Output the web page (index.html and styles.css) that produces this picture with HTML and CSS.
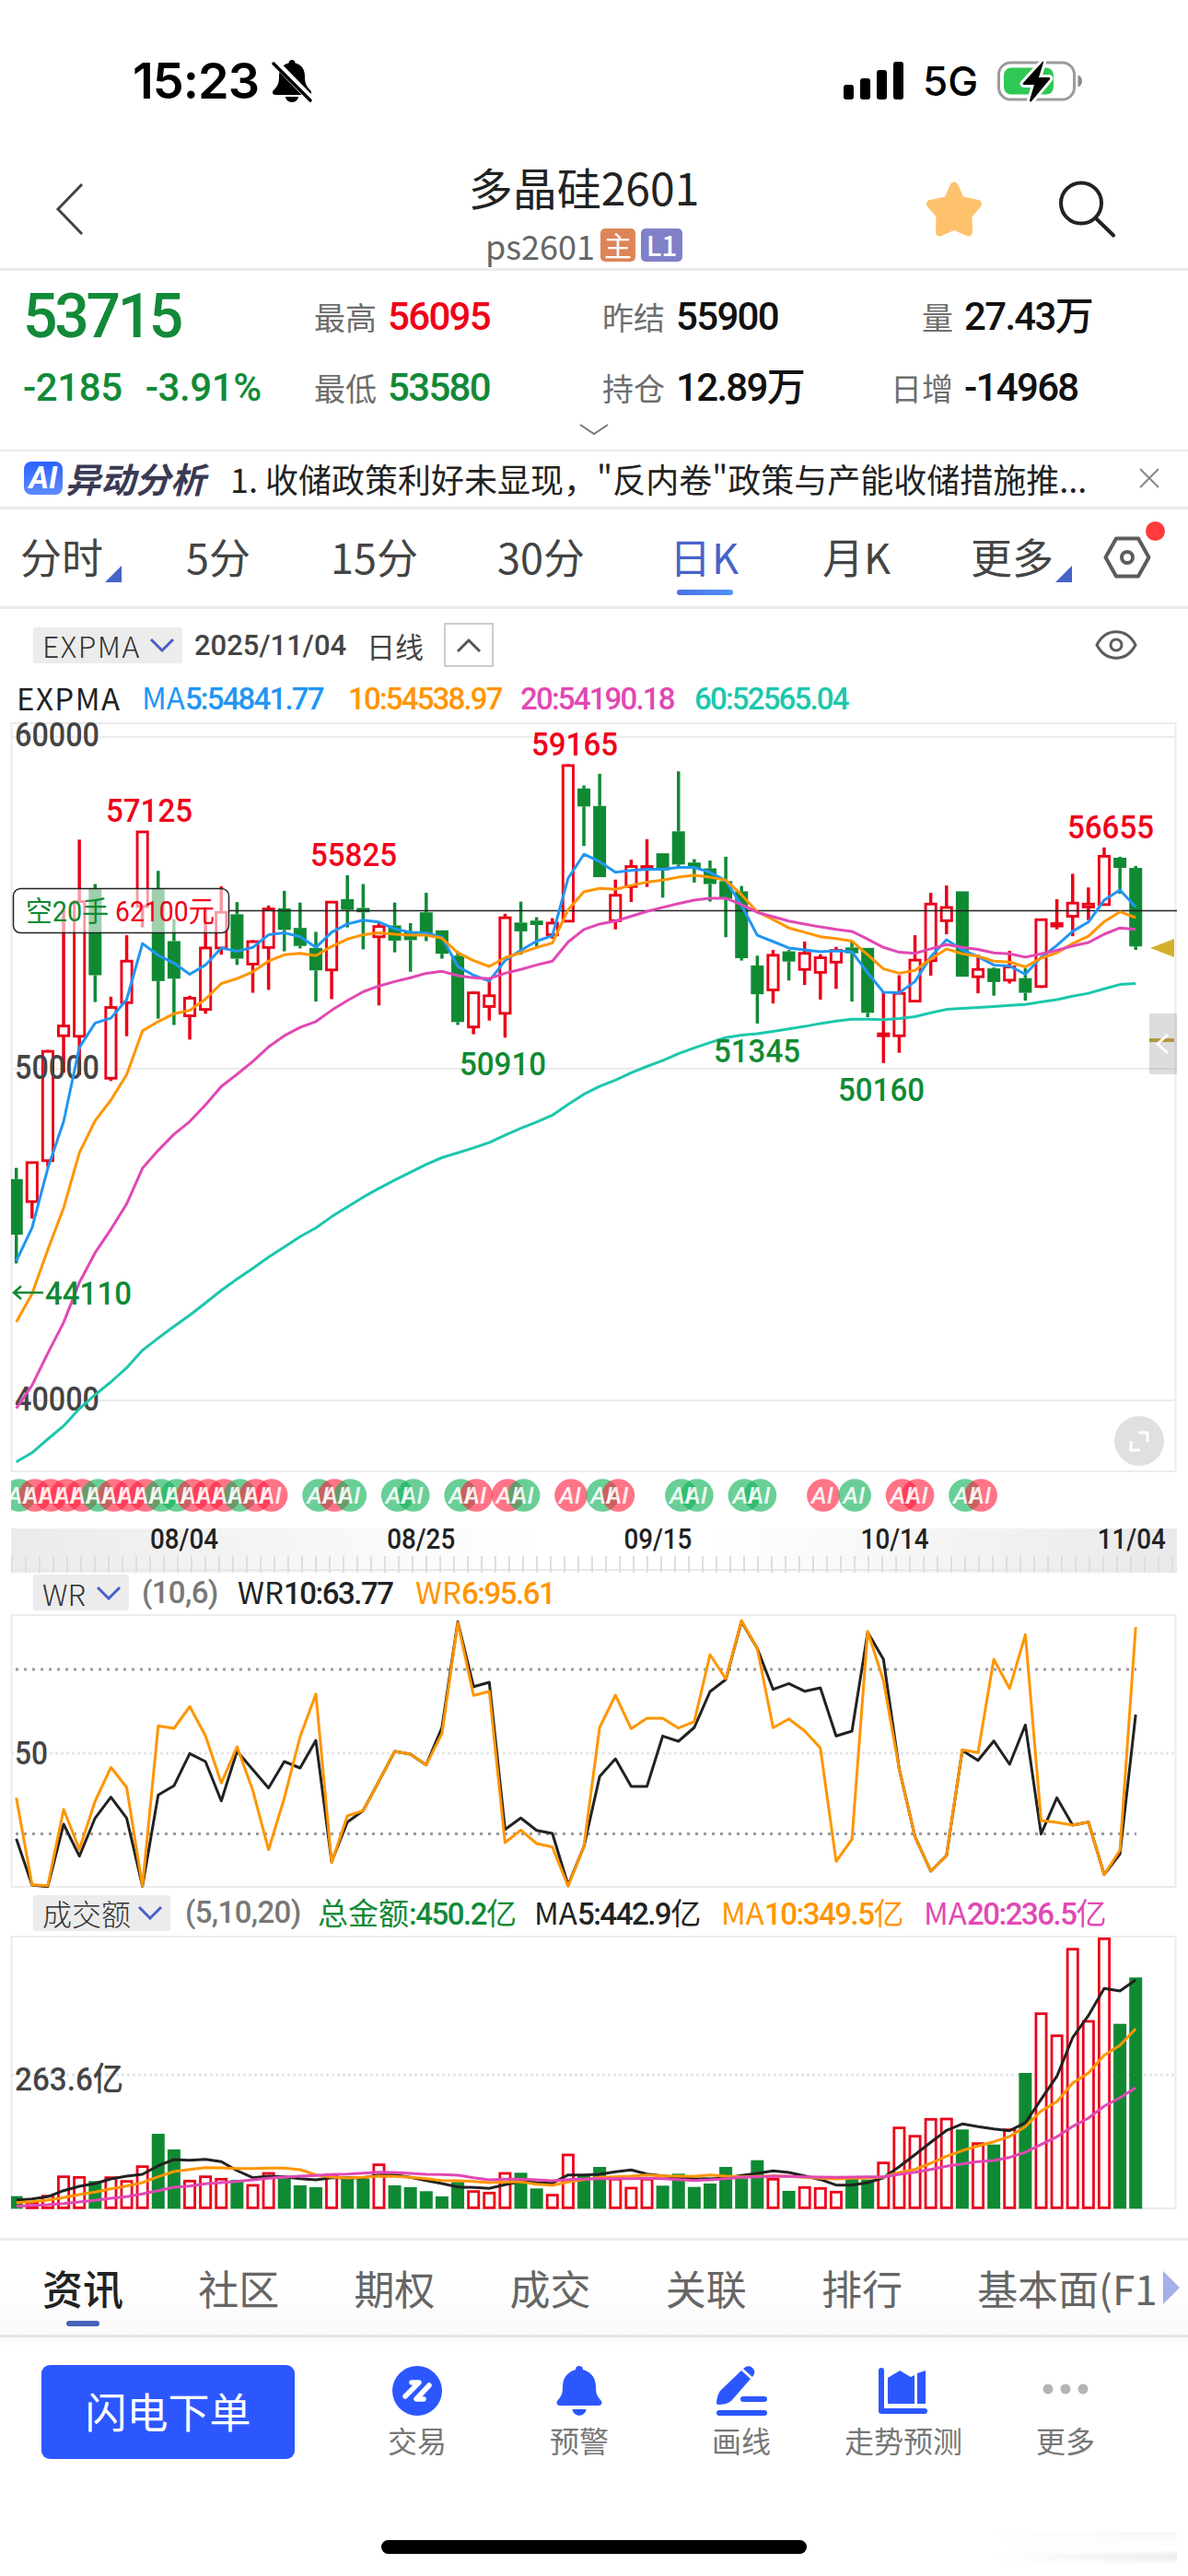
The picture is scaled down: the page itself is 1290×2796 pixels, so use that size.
FILE: index.html
```html
<!DOCTYPE html>
<html lang="zh-CN">
<head>
    <meta charset="UTF-8">
    <meta name="viewport" content="width=device-width, initial-scale=1.0">
    <title>多晶硅2601</title>
    <link rel="stylesheet" href="styles.css">
</head>
<body>
    <div class="status-bar">
        <span class="clock">15:23</span>
        <svg class="bell-off" width="46" height="48" viewBox="0 0 46 48">
            <path d="M23 1c-2 0-3.500 1.500-3.500 3.500C12 6 9 12 9 19c0 8-2 11-6 15-2 2-1 5 2 5h36c3 0 4-3 2-5-4-4-6-7-6-15 0-7-3-13-10.500-14.500C26.500 2.500 25 1 23 1z"/>
            <path d="M16 41h14a7 6 0 0 1-14 0z"/>
            <path d="M4 3l40 41" stroke="#fff" stroke-width="8"/>
            <path d="M3 5l40 40" stroke="#000" stroke-width="3.500" stroke-linecap="round"/>
        </svg>
        <svg class="signal" width="66" height="42" viewBox="0 0 66 42">
            <rect x="0" y="25" width="11" height="16" rx="3"/>
            <rect x="18" y="18" width="11" height="23" rx="3"/>
            <rect x="36" y="9" width="11" height="32" rx="3"/>
            <rect x="54" y="0" width="11" height="41" rx="3"/>
        </svg>
        <span class="network">5G</span>
        <svg class="battery" width="94" height="46" viewBox="0 0 94 46">
            <rect x="1.500" y="3" width="82" height="40" rx="13" fill="none" stroke="#9b9b9b" stroke-width="3"/>
            <path d="M87.500 16.500c6 2 6 11 0 13z" fill="#8a8a8a"/>
            <rect x="7" y="8.500" width="54" height="29" rx="8" fill="#30c854"/>
            <path d="M49 2L28 25c-1 1 0 2 1 2h11l-5 17c0 1 1 2 2 1l20-24c1-1 0-2-1-2H45l5-16c0-1 0-2-1-1z" fill="#000" stroke="#fff" stroke-width="6" paint-order="stroke"/>
        </svg>
    </div>

    <header class="header">
        <svg class="back" width="34" height="58" viewBox="0 0 34 58"><path d="M29 2L3 29l26 27" fill="none" stroke="#444" stroke-width="3"/></svg>
        <div class="title">
            <h1>多晶硅2601</h1>
            <div class="code">ps2601<i class="badge main">主</i><i class="badge level">L1</i></div>
        </div>
        <div class="actions">
            <svg width="64" height="64" viewBox="0 0 64 64"><path d="M32 7l7 15.500 18.500 4L47 38.500 47.500 57 32 50 16.500 57l.5-18.500L6.500 26.500l18.500-4z" fill="#fec26d" stroke="#fec26d" stroke-width="9" stroke-linejoin="round"/></svg>
            <svg width="64" height="64" viewBox="0 0 64 64"><circle cx="26" cy="25.500" r="22" fill="none" stroke="#222" stroke-width="4"/><path d="M42 42l19 18.500" stroke="#222" stroke-width="4" stroke-linecap="round"/></svg>
        </div>
    </header>

    <section class="quote">
        <div class="price num down">53715</div>
        <div class="stat"><label>最高</label><b class="num up">56095</b></div>
        <div class="stat"><label>昨结</label><b class="num">55900</b></div>
        <div class="stat"><label>量</label><b class="num">27.43<span class="unit">万</span></b></div>
        <div class="change num down"><span>-2185</span><span>-3.91%</span></div>
        <div class="stat"><label>最低</label><b class="num down">53580</b></div>
        <div class="stat"><label>持仓</label><b class="num">12.89<span class="unit">万</span></b></div>
        <div class="stat"><label>日增</label><b class="num">-14968</b></div>
        <svg class="expand" width="34" height="13" viewBox="0 0 34 13"><path d="M2 1l15 10L32 1" fill="none" stroke="#777" stroke-width="2"/></svg>
    </section>

    <section class="analysis">
        <span class="ai-logo">AI</span>
        <span class="ai-name">异动分析</span>
        <p>1. 收储政策利好未显现，"反内卷"政策与产能收储措施推...</p>
        <svg width="24" height="24" viewBox="0 0 24 24"><path d="M2 2l20 20M22 2L2 22" stroke="#888" stroke-width="2"/></svg>
    </section>

    <nav class="periods">
        <a class="more">分时</a>
        <a>5分</a>
        <a>15分</a>
        <a>30分</a>
        <a class="active">日K</a>
        <a>月K</a>
        <a class="more">更多</a>
        <div class="settings">
            <svg width="54" height="48" viewBox="0 0 54 48"><path d="M15 3.500h24L50.500 24 39 44.500H15L3.500 24z" fill="none" stroke="#5c5c5c" stroke-width="4" stroke-linejoin="round"/><circle cx="27" cy="24" r="6" fill="none" stroke="#5c5c5c" stroke-width="4"/></svg>
            <span class="dot"></span>
        </div>
    </nav>

    <div class="toolbar">
        <span class="pill wide">EXPMA<svg width="28" height="16" viewBox="0 0 28 16"><path d="M2 2l12 12L26 2" fill="none" stroke="#4a5fc8" stroke-width="3"/></svg></span>
        <span class="date num">2025/11/04</span>
        <span class="line-type">日线</span>
        <span class="fold"><svg width="28" height="17" viewBox="0 0 28 17"><path d="M2 15L14 3l12 12" fill="none" stroke="#555" stroke-width="3"/></svg></span>
        <svg class="eye" width="46" height="34" viewBox="0 0 46 34"><path d="M2 17C12-2 34-2 44 17 34 36 12 36 2 17z" fill="none" stroke="#5c5c5c" stroke-width="3"/><circle cx="23" cy="17" r="6" fill="none" stroke="#5c5c5c" stroke-width="3"/></svg>
    </div>
    <div class="legend main-legend">
        <span class="name">EXPMA</span>
        <span class="blue">MA<b class="num">5:54841.77</b></span>
        <span class="orange"><b class="num">10:54538.97</b></span>
        <span class="pink"><b class="num">20:54190.18</b></span>
        <span class="teal"><b class="num">60:52565.04</b></span>
    </div>
    <svg id="kline" class="chart" width="1290" height="927" viewBox="0 782 1290 927"></svg>

    <div class="legend wr-legend">
        <span class="pill">WR<svg width="28" height="16" viewBox="0 0 28 16"><path d="M2 2l12 12L26 2" fill="none" stroke="#4a5fc8" stroke-width="3"/></svg></span>
        <span class="gray num">(10,6)</span>
        <span>WR<b class="num">10:63.77</b></span>
        <span class="orange">WR<b class="num">6:95.61</b></span>
    </div>
    <svg id="wr" class="chart" width="1290" height="302" viewBox="0 1749 1290 302"></svg>

    <div class="legend vol-legend">
        <span class="pill">成交额<svg width="28" height="16" viewBox="0 0 28 16"><path d="M2 2l12 12L26 2" fill="none" stroke="#4a5fc8" stroke-width="3"/></svg></span>
        <span class="gray num">(5,10,20)</span>
        <span class="green">总金额<b class="num">:450.2</b>亿</span>
        <span>MA<b class="num">5:442.9</b>亿</span>
        <span class="orange">MA<b class="num">10:349.5</b>亿</span>
        <span class="pink">MA<b class="num">20:236.5</b>亿</span>
    </div>
    <svg id="volume" class="chart" width="1290" height="331" viewBox="0 2098 1290 331"></svg>

    <nav class="info-tabs">
        <a class="active">资讯</a>
        <a>社区</a>
        <a>期权</a>
        <a>成交</a>
        <a>关联</a>
        <a>排行</a>
        <a>基本面(F1</a>
    </nav>

    <footer class="bottom-bar">
        <button class="order-btn">闪电下单</button>
        <div class="tool">
            <svg width="56" height="56" viewBox="0 0 56 56"><circle cx="28" cy="28" r="27" fill="#2c57ff"/><path d="M22 19h8L15 34M41 22L27 37h8" fill="none" stroke="#fff" stroke-width="5.500" stroke-linecap="round" stroke-linejoin="round"/></svg>
            <span>交易</span>
        </div>
        <div class="tool">
            <svg width="56" height="56" viewBox="0 0 56 56"><path d="M28 1c-2.500 0-4 1.500-4 4C14 8 10 15 10 24c0 8-2 10-5 14-3 3-1 6 2 6h42c3 0 5-3 2-6-3-4-5-6-5-14 0-9-4-16-14-19 0-2.500-1.500-4-4-4zM20.500 48h15c-1 9-14 9-15 0z" fill="#2c57ff"/></svg>
            <span>预警</span>
        </div>
        <div class="tool">
            <svg width="56" height="56" viewBox="0 0 56 56"><path d="M28 6l10 9-21 24c-4 3-9 4-14 4-2 0-2-1-2-3 1-6 2-9 4-12zM30 4c3-3 7-4 10-1s3 6 0 10zM30 34h23a3 3 0 0 1 0 6H30a3 3 0 0 1 0-6zM4 49h49a3 3 0 0 1 0 6H4a3 3 0 0 1 0-6z" fill="#2c57ff"/></svg>
            <span>画线</span>
        </div>
        <div class="tool">
            <svg width="56" height="56" viewBox="0 0 56 56"><path d="M4 6v44h47" fill="none" stroke="#2c57ff" stroke-width="6" stroke-linecap="round" stroke-linejoin="round"/><path d="M11 14L24 6l12 7 4-2v31H11zM43 9l9-3v36h-9z" fill="#2c57ff"/></svg>
            <span>走势预测</span>
        </div>
        <div class="tool">
            <svg width="56" height="56" viewBox="0 0 56 56" fill="#b4b4b4"><circle cx="9" cy="26" r="5.500"/><circle cx="28" cy="26" r="5.500"/><circle cx="47" cy="26" r="5.500"/></svg>
            <span>更多</span>
        </div>
        <div class="home-bar"></div>
        <div class="smudge"></div>
    </footer>

    <script src="chart.js"></script>
</body>
</html>
```
FILE: styles.css
```css
* {
    margin: 0;
    padding: 0;
    box-sizing: border-box;
}

body {
    width: 1290px;
    font-family: "Noto Sans CJK SC", sans-serif;
    background: #fff;
    color: #222;
}

svg {
    display: block;
    flex-shrink: 0;
}

b, i, label {
    font-style: normal;
}

.num {
    font-family: Roboto, "Noto Sans CJK SC", sans-serif;
    font-weight: 500;
    letter-spacing: -0.045em;
}

.up { color: #f00019; }
.down, .green { color: #128a38; }
.blue { color: #2196f3; }
.orange { color: #ff9500; }
.pink { color: #e148b4; }
.teal { color: #1cc7ac; }

/* status bar */
.status-bar {
    display: flex;
    align-items: center;
    height: 150px;
    padding: 25px 0 0 144px;
    font-family: Inter, sans-serif;
    color: #000;
}

.clock {
    width: 150px;
    font-size: 54px;
    font-weight: 600;
    letter-spacing: -1px;
    white-space: nowrap;
}

.signal {
    margin-left: 576px;
}

.network {
    width: 81px;
    margin-left: 20px;
    font-size: 44px;
    font-weight: 500;
}

/* header */
.header {
    display: grid;
    grid-template-columns: 400px 468px 1fr;
    grid-template-rows: 141px;
    align-items: center;
    height: 144px;
    border-bottom: 3px solid #ebebeb;
}

.back {
    margin: 13px 0 0 60px;
}

.title {
    padding-top: 24px;
    text-align: center;
}

h1 {
    font-size: 48px;
    font-weight: 400;
    line-height: 66px;
}

.code {
    display: flex;
    align-items: center;
    justify-content: center;
    font-size: 36px;
    line-height: 62px;
    color: #666;
}

.badge {
    margin-left: 6px;
    width: 38px;
    height: 36px;
    border-radius: 5px;
    font-size: 30px;
    line-height: 34px;
    text-align: center;
    color: #fff;
}

.badge.main { background: #de8558; }

.badge.level {
    width: 45px;
    background: #8080c8;
    font-weight: 500;
}

.actions {
    display: flex;
    gap: 80px;
    padding: 12px 0 0 136px;
}

/* quote */
.quote {
    position: relative;
    display: grid;
    grid-template-columns: 315px 313px 313px 1fr;
    grid-auto-rows: 77px;
    align-items: center;
    height: 196px;
    padding: 11px 0 0 25px;
    border-bottom: 2px solid #ebebeb;
}

.price {
    font-size: 66px;
    letter-spacing: -0.05em;
}

.change {
    display: flex;
    gap: 25px;
    font-size: 42px;
    letter-spacing: -0.01em;
}

.stat {
    display: flex;
    align-items: baseline;
    font-size: 34px;
    line-height: 50px;
}

.stat label {
    width: 69px;
    margin-right: 12px;
    text-align: right;
    color: #6e6e6e;
}

.stat .num {
    font-size: 42px;
    color: #111;
    letter-spacing: -0.04em;
    white-space: nowrap;
}

.stat .up { color: #f00019; }
.stat .down { color: #128a38; }

.stat .unit {
    font-size: 42px;
    line-height: 0;
}

.expand {
    position: absolute;
    left: 628px;
    bottom: 15px;
}

/* AI analysis strip */
.analysis {
    display: flex;
    align-items: center;
    height: 63px;
    padding: 0 0 3px 26px;
    border-bottom: 3px solid #ebebeb;
}

.ai-logo {
    width: 42px;
    height: 36px;
    border-radius: 8px;
    background: linear-gradient(#2c62ff, #5f8cff);
    color: #fff;
    font: italic 700 33px/36px Roboto, sans-serif;
    text-align: center;
}

.ai-name {
    width: 179px;
    margin-left: 3px;
    font-size: 38px;
    font-weight: 700;
    font-style: italic;
    color: #3a3a55;
    line-height: 56px;
}

.analysis p {
    width: 986px;
    font-size: 36px;
    line-height: 56px;
    white-space: nowrap;
}

/* period tabs */
.periods {
    display: grid;
    grid-template-columns: 180px 157px 181px 187px 166px 161px 141px 1fr;
    height: 108px;
    padding-left: 22px;
    border-bottom: 3px solid #ebebeb;
    font-size: 45px;
    line-height: 102px;
    color: #444;
}

.periods a {
    position: relative;
    justify-self: start;
}

.periods .more::after {
    content: "";
    position: absolute;
    right: -20px;
    bottom: 26px;
    border-left: 18px solid transparent;
    border-bottom: 18px solid #4663c8;
}

.periods .active {
    color: #4663c8;
    letter-spacing: 1px;
}

.periods .active::after {
    content: "";
    position: absolute;
    left: 8px;
    right: 7px;
    bottom: 12px;
    height: 6px;
    border-radius: 3px;
    background: linear-gradient(90deg, #4b70e0, #4f93ff);
}

.settings {
    position: relative;
    padding-top: 28px;
    padding-left: 2px;
}

.settings .dot {
    position: absolute;
    left: 49px;
    top: 13px;
    width: 21px;
    height: 21px;
    border-radius: 50%;
    background: #ff3b3b;
}

/* indicator toolbar */
.toolbar {
    display: flex;
    align-items: center;
    height: 78px;
    padding-left: 36px;
}

.pill {
    display: flex;
    align-items: center;
    justify-content: space-between;
    height: 39px;
    padding: 0 8px 0 10px;
    background: #ececec;
    border-radius: 3px;
    font-size: 32px;
    font-weight: 300;
    line-height: 36px;
    color: #333;
}

.pill.wide { letter-spacing: 1.500px; }
.toolbar .pill { width: 162px; }
.wr-legend .pill { width: 104px; }
.vol-legend .pill { width: 149px; }

.date {
    width: 187px;
    margin-left: 13px;
    font-size: 31px;
    letter-spacing: 0;
    color: #444;
}

.line-type {
    width: 84px;
    font-size: 31px;
    color: #444;
}

.fold {
    display: flex;
    align-items: center;
    justify-content: center;
    width: 54px;
    height: 48px;
    border: 2px solid #ccc;
}

.eye {
    margin-left: 653px;
}

/* chart legends */
.legend {
    display: grid;
    align-items: center;
    font-size: 33px;
    line-height: 30px;
    white-space: nowrap;
}

.legend .num {
    font-size: 33px;
}

.legend .gray {
    color: #777;
    letter-spacing: -0.02em;
}

.main-legend {
    grid-template-columns: 136px 224px 187px 189px 1fr;
    height: 43px;
    padding: 0 0 7px 18px;
}

.main-legend .name {
    letter-spacing: 1.500px;
}

.main-legend .num {
    letter-spacing: -0.055em;
}

.wr-legend {
    grid-template-columns: 118px 104px 193px 1fr;
    height: 40px;
    padding: 0 0 1px 36px;
}

.vol-legend {
    grid-template-columns: 165px 144px 235px 203px 220px 1fr;
    height: 47px;
    padding: 3px 0 0 36px;
}

.chart {
    overflow: visible;
}

.chart text {
    font-family: Roboto, "Noto Sans CJK SC", sans-serif;
    font-weight: 500;
}

.chart .position {
    font-weight: 400;
}

/* info tabs */
.info-tabs {
    position: relative;
    display: grid;
    grid-template-columns: repeat(6, 169.2px) 1fr;
    height: 108px;
    padding-left: 46px;
    border-top: 3px solid #ebebeb;
    border-bottom: 3px solid #e6e6e6;
    background: linear-gradient(#fff 40%, #f9f9f9);
    font-size: 44px;
    line-height: 102px;
    color: #666;
}

.info-tabs a {
    position: relative;
    white-space: nowrap;
}

.info-tabs .active {
    color: #222;
    font-weight: 500;
}

.info-tabs .active::after {
    content: "";
    position: absolute;
    left: 26px;
    bottom: 9px;
    width: 36px;
    height: 6px;
    border-radius: 3px;
    background: #4663b8;
}

.info-tabs::after {
    content: "";
    position: absolute;
    right: 9px;
    top: 33px;
    border: 18px solid transparent;
    border-right: 0;
    border-left-color: #a4b1e6;
}

/* bottom bar */
.bottom-bar {
    position: relative;
    display: flex;
    height: 259px;
    padding: 30px 0 0 45px;
    background: linear-gradient(#fafafa, #fff 10px);
}

.order-btn {
    width: 275px;
    height: 102px;
    margin-right: 45px;
    padding-bottom: 3px;
    border: 0;
    border-radius: 9px;
    background: #2c57ff;
    color: #fff;
    font-family: inherit;
    font-size: 45px;
}

.tool {
    display: flex;
    flex-direction: column;
    align-items: center;
    width: 176px;
    font-size: 32px;
    line-height: 51px;
    color: #777;
}

.home-bar {
    position: absolute;
    left: 414px;
    top: 220px;
    width: 462px;
    height: 15px;
    border-radius: 8px;
    background: #000;
}

.smudge {
    position: absolute;
    right: 12px;
    bottom: 12px;
    width: 200px;
    height: 36px;
    background: linear-gradient(90deg, #fff, rgba(255, 255, 255, 0.3)), linear-gradient(#f2f2f2, #fff 45%, #fff 55%, #e2e2e2 75%, #fff);
}
```
FILE: chart.js
```js
const NS = 'http://www.w3.org/2000/svg';
const X0 = 17.7;
const STEP = 17.12;
const RED = '#eb0019';
const GREEN = '#0f8a33';

// colour, high, body top, body bottom, low
const candles = [
    ['g',940,963,1077,1136],['r',928,928,1008,1044],['r',698,700,924,938],['r',410,648,668,745],['r',267,393,669,750],['g',358,367,545,600],
    ['r',589,610,755,762],['r',463,515,600,670],['r',250,250,403,447],['g',331,367,557,634],['g',430,475,552,647],['r',587,591,627,677],
    ['r',405,488,614,624],['r',363,415,488,503],['g',395,420,511,524],['r',473,475,521,581],['r',402,408,487,575],['g',372,408,452,496],
    ['g',396,448,485,490],['g',456,489,535,599],['r',393,394,533,594],['g',340,389,411,447],['g',358,407,416,492],['r',438,444,465,607],
    ['g',396,443,474,498],['g',438,455,473,538],['g',376,416,460,475],['g',453,453,501,511],['g',496,505,641,647],['r',578,580,650,666],
    ['r',555,586,608,638],['r',419,426,622,673],['g',394,437,455,503],['g',426,433,442,486],['r',428,437,461,470],['r',112,114,433,433],
    ['g',156,162,199,280],['g',132,198,344,344],['r',349,380,432,451],['r',308,321,362,395],['r',266,321,326,364],['g',295,295,330,386],
    ['g',127,250,318,327],['g',307,314,325,355],['g',310,326,358,394],['g',302,352,388,467],['g',362,373,510,515],['g',505,525,584,644],
    ['r',493,503,574,603],['g',493,496,517,556],['r',476,499,532,565],['r',502,508,538,595],['r',487,493,517,573],['g',476,488,500,599],
    ['g',489,489,622,631],['r',580,664,668,725],['r',545,581,668,704],['r',463,513,597,597],['r',376,398,514,546],['r',361,405,432,461],
    ['g',373,373,548,548],['r',503,532,547,582],['g',529,531,559,587],['r',495,527,554,562],['g',531,551,581,597],['r',430,430,567,571],
    ['r',389,438,443,451],['r',337,396,423,465],['r',365,398,404,432],['r',283,300,399,399],['g',302,304,325,378],['g',321,325,486,493]
];

const ma5 = [1131,1063,941,845,693,643,633,595,480,504,520,543,524,489,496,488,462,458,466,488,457,440,432,436,450,457,458,467,527,545,557,515,494,475,464,346,297,312,334,330,328,328,324,324,334,351,402,463,476,489,493,497,495,497,540,580,581,558,507,472,493,507,524,526,543,508,484,455,436,391,370,405];
const ma10 = [1256,1198,1108,1022,909,843,801,749,659,640,624,617,594,562,552,538,516,503,500,505,486,471,462,458,461,463,463,469,499,515,527,509,499,488,479,411,374,367,369,361,354,350,344,340,344,350,380,415,431,448,457,466,470,475,503,532,541,535,512,491,501,506,516,518,528,510,499,480,465,435,415,427];
const ma20 = [1433,1386,1320,1257,1175,1114,1066,1014,941,904,871,845,811,773,748,722,692,669,652,640,617,597,579,567,558,550,541,537,546,550,552,541,533,524,516,477,451,440,434,424,414,406,398,391,387,387,400,416,425,434,440,446,451,455,471,488,498,500,491,482,488,492,499,501,508,501,494,485,478,461,448,451];
const ma60 = [1543,1524,1496,1469,1434,1405,1379,1350,1314,1289,1265,1242,1217,1191,1168,1146,1123,1102,1081,1063,1040,1020,1000,982,965,949,933,919,909,899,888,873,859,846,832,810,789,773,760,745,732,720,706,694,683,673,668,665,660,655,650,644,639,635,635,636,634,630,622,615,613,611,609,607,605,600,595,588,582,573,564,562];

const wr10 = [1217,1368,1373,1170,1274,1150,1082,1150,1372,1075,1045,940,966,1094,932,992,1052,966,987,897,1292,1163,1126,1030,933,942,977,855,511,722,708,1187,1150,1190,1200,1368,1243,1015,957,1047,1047,883,900,855,738,699,510,598,731,712,737,726,883,867,545,633,990,1210,1323,1272,930,962,899,975,847,1202,1084,1173,1163,1334,1267,813];
const wr6 = [1084,1367,1370,1122,1252,1095,985,1050,1372,850,858,787,882,1036,918,1060,1253,1085,885,746,1295,1143,1126,1030,933,942,977,875,514,751,737,1230,1189,1233,1244,1372,1243,855,750,859,825,825,857,836,618,697,507,598,856,827,866,922,1291,1219,542,703,990,1210,1323,1272,928,937,633,728,553,1158,1164,1173,1163,1334,1255,528];

const volume = 'g1001 r1020 r998 r935 r937 g952 r938 r950 r902 g798 g849 r949 r935 r943 g948 r963 r924 g943 g966 g972 r928 g945 g945 r896 g966 g972 g985 g1002 g955 r983 r988 r924 g925 g976 r995 r864 g930 g906 r943 r972 r943 g967 g928 g971 g960 g906 g943 g884 r943 g984 r970 r973 r985 g945 g947 r890 r776 r803 r748 r747 g784 r827 g833 r782 g600 r404 r476 r194 r429 r160 g440 g289'.split(' ');
const vma5 = [1014,1010,1003,983,969,960,945,936,930,902,882,884,881,889,918,941,936,938,944,948,941,941,941,932,932,940,950,960,971,973,976,964,953,957,959,932,932,930,922,916,929,935,940,944,945,942,934,927,919,924,935,947,965,965,957,941,905,866,826,787,766,775,782,788,762,686,611,485,413,325,333,297];
const vma10 = [1022,1019,1014,1006,996,988,977,968,957,938,921,914,908,909,911,911,910,910,915,932,939,942,940,936,937,940,944,950,951,953,957,955,955,962,966,955,947,940,938,936,932,935,936,937,932,936,938,937,935,937,940,943,945,943,942,939,924,914,894,871,853,838,824,807,775,724,694,633,600,542,510,456];
const vma20 = [1034,1031,1029,1025,1020,1015,1008,1003,994,983,972,968,961,957,953,948,943,939,936,934,931,929,926,923,924,927,930,931,933,941,948,946,946,948,951,947,946,944,944,944,943,944,947,950,948,944,940,938,936,937,938,939,940,939,938,938,930,923,914,904,896,889,885,875,858,833,808,774,747,708,681,648];

const markers = {
    g: [0, 5, 9, 10, 14, 19, 21, 24, 25, 28, 32, 37, 42, 43, 46, 47, 53, 60],
    r: [1, 2, 3, 4, 6, 7, 8, 11, 12, 13, 15, 16, 20, 29, 31, 35, 38, 51, 56, 57, 61]
};

const kY = v => 770 + v / 1.889;
const wrY = v => 1590 + v / 3;
const volY = v => 2050 + v / 3;
const cx = i => X0 + i * STEP;

function el(parent, name, attrs, text) {
    const node = document.createElementNS(NS, name);
    for (const key in attrs) node.setAttribute(key, attrs[key]);
    if (text) node.textContent = text;
    parent.appendChild(node);
    return node;
}

function line(svg, x1, y1, x2, y2, stroke, width, dash) {
    el(svg, 'line', { x1, y1, x2, y2, stroke, 'stroke-width': width, 'stroke-dasharray': dash || 'none' });
}

function series(svg, values, toY, stroke, width) {
    const points = values.map((v, i) => cx(i).toFixed(1) + ',' + toY(v).toFixed(1)).join(' ');
    el(svg, 'polyline', { points, fill: 'none', stroke, 'stroke-width': width, 'stroke-linejoin': 'round' });
}

function frame(svg, top, bottom) {
    el(svg, 'rect', { x: 12.5, y: top, width: 1264, height: bottom - top, fill: 'none', stroke: '#ececec', 'stroke-width': 2 });
}

function label(svg, x, y, width, size, fill, text, cls) {
    el(svg, 'text', { x, y, 'font-size': size, fill, textLength: width, lengthAdjust: 'spacingAndGlyphs', class: cls || 'value' }, text);
}

function drawKline() {
    const svg = document.getElementById('kline');
    frame(svg, 785, 1597);
    [800, 1160, 1520].forEach(y => line(svg, 12, y, 1277, y, '#ececec', 2));

    candles.forEach(([c, high, top, bottom, low], i) => {
        const x = cx(i);
        const color = c === 'r' ? RED : GREEN;
        line(svg, x, kY(high), x, kY(top), color, 3.5);
        line(svg, x, kY(bottom), x, kY(low), color, 3.5);
        if (c === 'g') {
            const left = Math.max(x - 7, 12);
            el(svg, 'rect', { x: left, y: kY(top), width: x + 7 - left, height: kY(bottom) - kY(top), fill: color });
        } else {
            const h = Math.max(kY(bottom) - kY(top), 1);
            el(svg, 'rect', { x: x - 5.6, y: kY(top) + 0.6, width: 11.2, height: h, fill: '#fff', stroke: color, 'stroke-width': 2.9 });
        }
    });

    label(svg, 16, 810, 92, 36, '#444', '60000');
    label(svg, 16, 1171, 92, 36, '#444', '50000');
    label(svg, 16, 1531, 92, 36, '#444', '40000');

    // current position
    el(svg, 'rect', { x: 14.5, y: 964.5, width: 234, height: 48, rx: 8, fill: 'rgba(255,255,255,0.6)', stroke: '#222', 'stroke-width': 1.5 });
    line(svg, 249, 988.5, 1278, 988.5, '#222', 1.5);
    label(svg, 28, 1000, 90, 31, GREEN, '空20手', 'position');
    label(svg, 125, 1000, 108, 31, '#f00019', '62100元', 'position');

    series(svg, ma5, kY, '#2196f3', 3);
    series(svg, ma10, kY, '#ff9500', 3);
    series(svg, ma20, kY, '#e148b4', 3);
    series(svg, ma60, kY, '#1cc7ac', 3);

    label(svg, 115, 892, 94, 35, '#f00019', '57125');
    label(svg, 337, 940, 94, 35, '#f00019', '55825');
    label(svg, 577, 820, 94, 35, '#f00019', '59165');
    label(svg, 1159, 910, 94, 35, '#f00019', '56655');
    label(svg, 499, 1167, 94, 35, GREEN, '50910');
    label(svg, 775, 1153, 94, 35, GREEN, '51345');
    label(svg, 910, 1195, 94, 35, GREEN, '50160');
    label(svg, 49, 1416, 94, 35, GREEN, '44110');
    el(svg, 'path', { d: 'M47 1403H15M23 1396l-8 7 8 7', fill: 'none', stroke: GREEN, 'stroke-width': 2.5 });

    el(svg, 'path', { d: 'M1249 1029l26-10v20z', fill: '#d3b02c' });
    line(svg, 1248, 1129, 1275, 1129, '#c9a32b', 4);
    el(svg, 'rect', { x: 1248, y: 1100, width: 30, height: 66, rx: 2, fill: 'rgba(120,120,120,0.25)' });
    el(svg, 'path', { d: 'M1268 1123l-11 10 11 10', fill: 'none', stroke: '#fff', 'stroke-width': 3 });

    el(svg, 'circle', { cx: 1237, cy: 1564, r: 27, fill: '#e0e0e0' });
    el(svg, 'path', { d: 'M1236 1555h10v10M1228 1564v10h10', fill: 'none', stroke: '#fff', 'stroke-width': 3 });

    const marks = [];
    for (const c in markers) markers[c].forEach(i => marks.push([20.8 + i * STEP, c]));
    marks.sort((a, b) => a[0] - b[0]);
    const defs = el(svg, 'defs', {});
    const clip = el(defs, 'clipPath', { id: 'plot' });
    el(clip, 'rect', { x: 12, y: 1600, width: 1266, height: 50 });
    const row = el(svg, 'g', { 'clip-path': 'url(#plot)' });
    marks.forEach(([x, c]) => {
        el(row, 'circle', { cx: x, cy: 1623, r: 17.8, fill: c === 'r' ? '#ff1f3d' : '#0fb257', opacity: 0.62 });
    });
    marks.forEach(([x]) => {
        el(row, 'text', { x: x - 1, y: 1632, 'font-size': 26, fill: '#fff', 'fill-opacity': 0.9, 'text-anchor': 'middle', 'font-style': 'italic' }, 'AI');
    });

    const fade = el(defs, 'linearGradient', { id: 'fade' });
    [[0, '#ebebeb'], [0.45, '#fff'], [0.6, '#fff'], [1, '#e9e9e9']].forEach(([offset, color]) => {
        el(fade, 'stop', { offset, 'stop-color': color });
    });
    el(svg, 'rect', { x: 12, y: 1659, width: 1266, height: 48, fill: 'url(#fade)' });
    line(svg, 12, 1704, 1278, 1704, '#e8e8e8', 2);
    for (let x = 13; x < 1278; x += 15) line(svg, x, 1689, x, 1707, '#dedede', 2);
    ['08/04', '08/25', '09/15', '10/14', '11/04'].forEach((d, i) => {
        label(svg, 163 + i * 257.2, 1681, 74, 31, '#222', d);
    });
}

function drawWr() {
    const svg = document.getElementById('wr');
    frame(svg, 1753, 2048);
    line(svg, 17, 1812, 1234, 1812, '#9a9aa2', 3, '3 6');
    line(svg, 17, 1990.5, 1234, 1990.5, '#9a9aa2', 3, '3 6');
    line(svg, 12, 1903, 1277, 1903, '#e6e6e6', 3, '3 3');
    label(svg, 16, 1915, 36, 35, '#444', '50');
    series(svg, wr10, wrY, '#222', 3);
    series(svg, wr6, wrY, '#ff9500', 3);
}

function drawVolume() {
    const svg = document.getElementById('volume');
    const base = volY(1042);
    frame(svg, 2102, 2397);
    line(svg, 12, 2252, 1277, 2252, '#e6e6e6', 3, '3 3');
    label(svg, 16, 2269, 118, 35, '#444', '263.6亿');
    volume.forEach((item, i) => {
        const x = cx(i);
        const top = volY(Number(item.slice(1)));
        if (item[0] === 'g') {
            const left = Math.max(x - 7, 12);
            el(svg, 'rect', { x: left, y: top, width: x + 7 - left, height: base - top, fill: GREEN });
        } else {
            el(svg, 'rect', { x: x - 5.6, y: top + 1, width: 11.2, height: base - top - 2, fill: '#fff', stroke: RED, 'stroke-width': 2.8 });
        }
    });
    series(svg, vma5, volY, '#222', 3);
    series(svg, vma10, volY, '#ff9500', 3);
    series(svg, vma20, volY, '#e148b4', 3);
}

drawKline();
drawWr();
drawVolume();
```
